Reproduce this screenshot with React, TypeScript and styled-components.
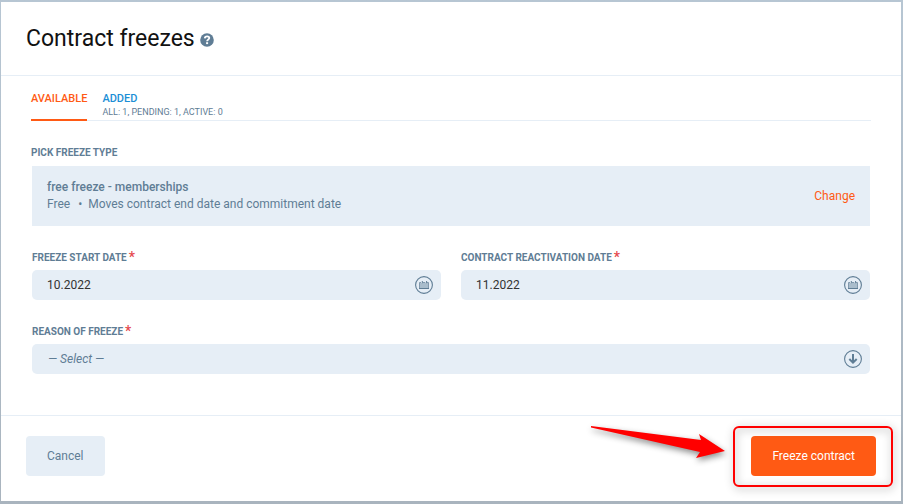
import React from "react";
import styled, { createGlobalStyle } from "styled-components";

const GlobalStyle = createGlobalStyle`
  *, *::before, *::after { box-sizing: border-box; }
  body { margin: 0; font-family: Roboto, "Liberation Sans", sans-serif; font-size: 12px; color: #5f7d95; }
  button, input, select { font: inherit; color: inherit; }
`;

const Backdrop = styled.div`
  display: flex;
  min-height: 100vh;
  padding: 2px 2px 3px 1px;
  background: linear-gradient(#b7c6d3, #a9b4be);
`;

const Dialog = styled.main`
  display: flex;
  flex: 1;
  flex-direction: column;
  background: #fff;
`;

const Header = styled.header`
  display: flex;
  align-items: center;
  gap: 5px;
  height: 74px;
  padding: 0 25px;
  border-bottom: 1px solid #e6eef6;
`;

const Title = styled.h1`
  margin: 0;
  color: #111;
  font-size: 23px;
  font-weight: 400;
  line-height: 28px;
`;

const HelpButton = styled.button`
  display: flex;
  margin-top: 3px;
  padding: 0;
  border: 0;
  background: none;
`;

const Body = styled.form`
  flex: 1;
  padding: 15px 30px 0;
`;

const Tabs = styled.div`
  display: flex;
  gap: 15px;
  height: 30px;
  box-shadow: inset 0 -1px #e6eef6;
`;

const Tab = styled.button<{ $active?: boolean }>`
  display: flex;
  flex-direction: column;
  align-items: flex-start;
  padding: 1px 0 0;
  border: 0;
  border-bottom: 2px solid ${(p) => (p.$active ? "#ff5a14" : "transparent")};
  background: none;
  color: ${(p) => (p.$active ? "#ff5a14" : "#1c8fd6")};
  font-size: 11px;
  font-weight: 500;
  line-height: 14px;
`;

const TabNote = styled.span`
  color: #5f7d95;
  font-size: 9px;
  font-weight: 400;
  line-height: 13px;
`;

const SectionLabel = styled.h2`
  margin: 25px 0 6px;
  font-size: 10px;
  font-weight: 700;
  line-height: 14px;
`;

const Fields = styled.div`
  padding: 0 1px;
`;

const TypeCard = styled.section`
  display: flex;
  align-items: center;
  justify-content: space-between;
  height: 60px;
  padding: 0 15px;
  background: #e6eef6;
`;

const TypeName = styled.strong`
  display: block;
  font-weight: 500;
  line-height: 17px;
`;

const TypeDetails = styled.div`
  display: flex;
  line-height: 17px;
`;

const Dot = styled.span`
  margin: 0 6px 0 8px;
`;

const ChangeButton = styled.button`
  padding: 0;
  border: 0;
  background: none;
  color: #ff5a14;
`;

const FieldRow = styled.div`
  display: grid;
  grid-template-columns: repeat(auto-fit, minmax(260px, 1fr));
  gap: 20px;
  margin-top: 25px;
`;

const Field = styled.div`
  display: flex;
  flex-direction: column;
  gap: 5px;
`;

const FieldLabel = styled.label`
  display: flex;
  gap: 2px;
  font-size: 10px;
  font-weight: 700;
  line-height: 14px;
`;

const Required = styled.span`
  color: #e5484d;
  font-size: 14px;
  font-weight: 500;
  line-height: 12px;
`;

const Control = styled.div`
  display: grid;
  align-items: center;
  border-radius: 5px;
  background: #e6eef6;

  > * { grid-area: 1 / 1; }
  > svg { justify-self: end; margin-right: 8px; pointer-events: none; }
`;

const TextInput = styled.input`
  width: 100%;
  height: 30px;
  padding: 0 36px 0 15px;
  border: 0;
  border-radius: 5px;
  background: transparent;
  color: #333;
`;

const Select = styled.select`
  width: 100%;
  height: 30px;
  padding: 0 36px 0 16px;
  border: 0;
  border-radius: 5px;
  background: transparent;
  font-style: italic;
  appearance: none;
`;

const Footer = styled.footer`
  display: flex;
  align-items: center;
  justify-content: space-between;
  height: 86px;
  padding: 0 25px 5px;
  border-top: 1px solid #e6eef6;
`;

const Button = styled.button<{ $primary?: boolean }>`
  height: 40px;
  padding: 0 21px;
  border: 0;
  border-radius: 4px;
  background: ${(p) => (p.$primary ? "#ff5a14" : "#e6eef6")};
  color: ${(p) => (p.$primary ? "#fff" : "#5f7d95")};
`;

const Highlighted = styled.div`
  position: relative;
`;

const HighlightFrame = styled.div`
  position: absolute;
  inset: -10px -17px -11px -18px;
  border: 2px solid #ff0000;
  border-radius: 6px;
  filter: drop-shadow(1px 2px 4px rgba(0, 0, 0, 0.4));
  pointer-events: none;
`;

const Pointer = styled.svg`
  position: absolute;
  top: -16px;
  right: 145px;
  overflow: visible;
  filter: drop-shadow(1px 3px 3px rgba(0, 0, 0, 0.45));
  pointer-events: none;
`;

const HelpIcon = () => (
  <svg width="14" height="14" viewBox="0 0 14 14" aria-hidden="true">
    <circle cx="7" cy="7" r="6.8" fill="#5f7d95" />
    <path
      d="M4.8 5.4C4.9 3.9 5.8 3.4 7.1 3.4c1.3 0 2.2.6 2.2 1.7C9.3 6.5 7.1 6.4 7.1 8.2"
      fill="none"
      stroke="#fff"
      strokeWidth="1.8"
    />
    <path d="M6.1 9.2h2v1.9h-2z" fill="#fff" />
  </svg>
);

const CalendarIcon = () => (
  <svg width="18" height="18" viewBox="0 0 18 18" fill="none" stroke="#5f7d95" aria-hidden="true">
    <circle cx="9" cy="9" r="8.4" strokeWidth="1.1" />
    <path d="M4.5 6.5h9v6h-9z" fill="#aabdcc" stroke="#8299ad" strokeWidth="1" />
    <path d="M4 12.5h10" strokeWidth="1" />
    <path d="M6 5h1.7v2H6zM10.3 5H12v2h-1.7z" fill="#e6eef6" stroke="none" />
    <path d="M7.3 5v2.2M11.6 5v2.2" strokeWidth="1" />
  </svg>
);

const ArrowDownIcon = () => (
  <svg width="18" height="18" viewBox="0 0 18 18" fill="none" stroke="#5f7d95" aria-hidden="true">
    <circle cx="9" cy="9" r="8.4" strokeWidth="1.1" />
    <path d="M9 4v8.5M5.3 9 9 12.7 12.7 9" strokeWidth="2" />
  </svg>
);

interface DateFieldProps {
  id: string;
  label: string;
  value: string;
}

const DateField = ({ id, label, value }: DateFieldProps) => (
  <Field>
    <FieldLabel htmlFor={id}>{label}<Required>*</Required></FieldLabel>
    <Control>
      <TextInput id={id} type="text" defaultValue={value} required />
      <CalendarIcon />
    </Control>
  </Field>
);

export default function App() {
  return (
    <>
      <GlobalStyle />
      <Backdrop>
        <Dialog>
          <Header>
            <Title>Contract freezes</Title>
            <HelpButton type="button" aria-label="Help"><HelpIcon /></HelpButton>
          </Header>
          <Body id="freeze-form">
            <Tabs role="tablist">
              <Tab type="button" role="tab" aria-selected="true" $active>AVAILABLE</Tab>
              <Tab type="button" role="tab" aria-selected="false">
                ADDED
                <TabNote>ALL: 1, PENDING: 1, ACTIVE: 0</TabNote>
              </Tab>
            </Tabs>
            <SectionLabel>PICK FREEZE TYPE</SectionLabel>
            <Fields>
              <TypeCard>
                <div>
                  <TypeName>free freeze - memberships</TypeName>
                  <TypeDetails>
                    <span>Free</span>
                    <Dot>•</Dot>
                    <span>Moves contract end date and commitment date</span>
                  </TypeDetails>
                </div>
                <ChangeButton type="button">Change</ChangeButton>
              </TypeCard>
              <FieldRow>
                <DateField id="start" label="FREEZE START DATE" value="10.2022" />
                <DateField id="reactivation" label="CONTRACT REACTIVATION DATE" value="11.2022" />
              </FieldRow>
              <FieldRow>
                <Field>
                  <FieldLabel htmlFor="reason">REASON OF FREEZE<Required>*</Required></FieldLabel>
                  <Control>
                    <Select id="reason" required defaultValue="">
                      <option value="">— Select —</option>
                    </Select>
                    <ArrowDownIcon />
                  </Control>
                </Field>
              </FieldRow>
            </Fields>
          </Body>
          <Footer>
            <Button type="button">Cancel</Button>
            <Highlighted>
              <Button type="submit" form="freeze-form" $primary>Freeze contract</Button>
              <HighlightFrame />
              <Pointer width="146" height="50" viewBox="0 0 146 50" aria-hidden="true">
                <path d="M6 6 116 20 114 14 140 31 111 38 115 32 6 7.5z" fill="#ff0000" />
              </Pointer>
            </Highlighted>
          </Footer>
        </Dialog>
      </Backdrop>
    </>
  );
}
